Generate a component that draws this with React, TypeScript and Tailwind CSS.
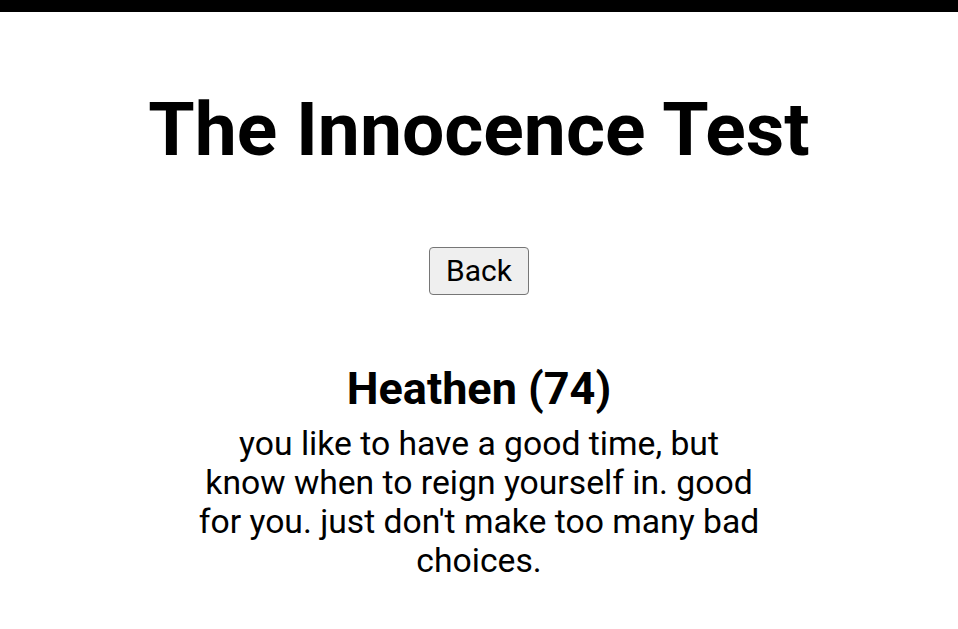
export default function App() {
  return (
    <div className="min-h-screen bg-white text-black" style={{ fontFamily: "Roboto, 'Noto Sans', sans-serif" }}>
      <div className="h-3 bg-black" />
      <div className="flex flex-col items-center text-center">
        <h1 className="mt-[80px] text-[75px] font-bold leading-none">The Innocence Test</h1>
        <button className="mt-[80px] h-12 w-[100px] rounded border border-[#767676] bg-[#efefef] text-[30px] leading-none">
          Back
        </button>
        <h2 className="mt-[68px] text-[45px] font-bold leading-[52px]">Heathen (74)</h2>
        <p className="mt-[9px] w-[565px] text-[33.7px] leading-[39px]">
          you like to have a good time, but know when to reign yourself in. good for you. just don't make too many bad choices.
        </p>
      </div>
    </div>
  );
}
